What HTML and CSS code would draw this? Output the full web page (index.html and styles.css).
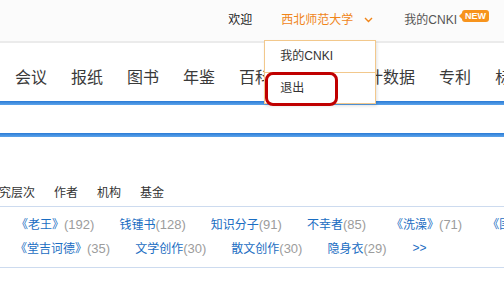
FILE: index.html
```html
<!DOCTYPE html>
<html lang="zh-CN">
<head>
    <meta charset="UTF-8">
    <meta name="viewport" content="width=device-width, initial-scale=1.0">
    <title>CNKI</title>
    <link rel="stylesheet" href="styles.css">
</head>
<body>
    <div class="topbar">
        <ul class="top-links">
            <li class="welcome">欢迎</li>
            <li class="user">
                <span class="user-name">西北师范大学</span>
                <svg class="chevron" width="9" height="6" viewBox="0 0 9 6">
                    <polyline points="1,1 4.5,4.5 8,1" fill="none" stroke="#f08519" stroke-width="1.4"/>
                </svg>
                <ul class="user-menu">
                    <li class="menu-first">我的CNKI</li>
                    <li class="logout">退出<span class="mark"></span></li>
                </ul>
            </li>
            <li class="my-cnki">
                <span>我的CNKI</span>
                <span class="badge-new">NEW</span>
            </li>
        </ul>
    </div>

    <ul class="nav">
        <li>会议</li>
        <li>报纸</li>
        <li>图书</li>
        <li>年鉴</li>
        <li>百科</li>
        <li>词典</li>
        <li>统计数据</li>
        <li>专利</li>
        <li>标准</li>
    </ul>
    <div class="rule-blue"></div>
    <div class="rule-blue second"></div>

    <ul class="filter-tabs">
        <li>研究层次</li>
        <li>作者</li>
        <li>机构</li>
        <li>基金</li>
    </ul>

    <div class="tag-list">
        <ul class="tag-row">
            <li><a href="#">《老王》</a><span class="count">(192)</span></li>
            <li><a href="#">钱锺书</a><span class="count">(128)</span></li>
            <li><a href="#">知识分子</a><span class="count">(91)</span></li>
            <li><a href="#">不幸者</a><span class="count">(85)</span></li>
            <li><a href="#">《洗澡》</a><span class="count">(71)</span></li>
            <li><a href="#">《围城》</a><span class="count">(58)</span></li>
        </ul>
        <ul class="tag-row">
            <li><a href="#">《堂吉诃德》</a><span class="count">(35)</span></li>
            <li><a href="#">文学创作</a><span class="count">(30)</span></li>
            <li><a href="#">散文创作</a><span class="count">(30)</span></li>
            <li><a href="#">隐身衣</a><span class="count">(29)</span></li>
            <li><a href="#" class="more">&gt;&gt;</a></li>
        </ul>
    </div>

    <div class="rule-bottom"></div>
</body>
</html>
```

FILE: styles.css
```css
* {
    margin: 0;
    padding: 0;
    box-sizing: border-box;
}

body {
    font-family: "Liberation Sans", "Noto Sans CJK SC", sans-serif;
    color: #333;
    background: #fff;
    overflow: hidden;
    white-space: nowrap;
}

ul {
    list-style: none;
}

a {
    text-decoration: none;
}

.topbar {
    height: 43px;
    background-color: #fbfbfb;
    border-bottom: 2px solid #ebebeb;
    position: relative;
    z-index: 5;
}

.top-links {
    display: flex;
    justify-content: flex-end;
    padding-right: 15px;
    font-size: 12px;
    line-height: 41px;
}

.welcome {
    margin-right: 12px;
    color: #222;
}

.user {
    position: relative;
    width: 112px;
    padding-left: 17px;
    margin-right: 28px;
    color: #f08519;
}

.chevron {
    margin-left: 7px;
    vertical-align: 1px;
}

.user-menu {
    position: absolute;
    top: 40px;
    left: 0;
    width: 112px;
    background-color: #fff;
    border: 1px solid #f2c88c;
    box-shadow: 1px 2px 3px rgba(0, 0, 0, 0.12);
    color: #333;
}

.user-menu li {
    position: relative;
    height: 30px;
    line-height: 30px;
    padding-left: 15px;
}

.user-menu .menu-first {
    height: 32px;
    line-height: 31px;
    border-bottom: 1px solid #f2c88c;
}

.mark {
    position: absolute;
    top: -1px;
    left: 0;
    width: 73px;
    height: 34px;
    border: 3px solid #c00000;
    border-radius: 8px;
}

.my-cnki {
    display: flex;
    align-items: flex-start;
    color: #555;
}

.badge-new {
    position: relative;
    margin-top: 10px;
    margin-left: 5px;
    height: 12px;
    padding: 0 3px;
    background-color: #f7941d;
    border-radius: 3px;
    color: #fff;
    font-size: 9px;
    font-weight: bold;
    line-height: 12px;
}

.badge-new::before {
    content: "";
    position: absolute;
    left: -3px;
    top: 3px;
    border-top: 3px solid transparent;
    border-bottom: 3px solid transparent;
    border-right: 3px solid #f7941d;
}

.nav {
    display: flex;
    gap: 24px;
    padding: 24px 0 12px 15px;
    font-size: 16px;
    line-height: 22px;
    color: #3a3a3a;
}

.rule-blue {
    height: 4px;
    background: linear-gradient(#2a7bd6, #5ea4ea);
}

.rule-blue.second {
    margin-top: 28px;
}

.filter-tabs {
    display: flex;
    gap: 19px;
    margin-left: -13px;
    padding-top: 43px;
    font-size: 12px;
    line-height: 26px;
    color: #333;
}

.tag-list {
    padding: 6px 0;
    border-top: 1px solid #cddbef;
    border-bottom: 1px solid #cddbef;
    font-size: 12px;
    line-height: 23px;
}

.tag-row {
    display: flex;
    gap: 25px;
    padding-left: 16px;
}

.tag-row + .tag-row {
    padding-left: 15px;
}

.tag-row a {
    color: #1a6dc2;
}

.count {
    color: #9c9c9c;
    font-size: 13px;
}

.tag-row .more {
    margin-left: 1px;
}

.rule-bottom {
    margin-top: 21px;
    height: 3px;
    background-color: #2a7bd0;
}
```
